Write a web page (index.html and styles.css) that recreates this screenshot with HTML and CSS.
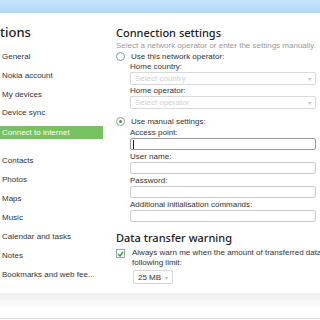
FILE: index.html
```html
<!DOCTYPE html>
<html>
<head>
<meta charset="utf-8">
<link rel="stylesheet" href="styles.css">
</head>
<body>
<div class="topbar"></div>
<div class="main">
  <aside class="side">
    <h1 class="side-title">tions</h1>
    <ul class="nav">
      <li>General</li>
      <li>Nokia account</li>
      <li>My devices</li>
      <li>Device sync</li>
      <li class="active">Connect to internet</li>
      <li class="gap">Contacts</li>
      <li>Photos</li>
      <li>Maps</li>
      <li>Music</li>
      <li>Calendar and tasks</li>
      <li>Notes</li>
      <li>Bookmarks and web fee...</li>
    </ul>
  </aside>
  <section class="content">
    <h2 class="title">Connection settings</h2>
    <p class="hint">Select a network operator or enter the settings manually.</p>
    <div class="radio-row"><span class="radio"></span><span>Use this network operator:</span></div>
    <div class="group">
      <div class="label">Home country:</div>
      <div class="select disabled"><span>Select country</span><span class="arrow">&#9662;</span></div>
      <div class="label">Home operator:</div>
      <div class="select disabled"><span>Select operator</span><span class="arrow">&#9662;</span></div>
    </div>
    <div class="radio-row second"><span class="radio on"></span><span>Use manual settings:</span></div>
    <div class="group">
      <div class="label">Access point:</div>
      <div class="input focus"><span class="caret"></span></div>
      <div class="label">User name:</div>
      <div class="input"></div>
      <div class="label">Password:</div>
      <div class="input"></div>
      <div class="label">Additional initialisation commands:</div>
      <div class="input"></div>
    </div>
    <h2 class="title title2">Data transfer warning</h2>
    <div class="check-row">
      <span class="check"><svg width="7" height="6" viewBox="0 0 7 6"><path d="M1 3 L3 5 L6 1" fill="none" stroke="#3a9a2a" stroke-width="1.4"/></svg></span>
      <span class="check-text">Always warn me when the amount of transferred data exceeds the following limit:</span>
    </div>
    <div class="small-select"><span>25 MB</span><span class="arrow">&#9662;</span></div>
  </section>
</div>
<div class="footer"></div>
</body>
</html>
```
FILE: styles.css
```css
html, body {
  margin: 0;
  padding: 0;
  width: 320px;
  height: 320px;
  overflow: hidden;
  background: #fff;
  font-family: "Liberation Sans", Arial, sans-serif;
  font-size: 8px;
  color: #333;
}
.topbar {
  height: 13px;
  background: linear-gradient(#c6e6fc, #aed8f8);
}
.main {
  display: flex;
  height: 280px;
}
.side {
  width: 103px;
  flex: none;
}
.side-title {
  margin: 12px 0 0 0;
  font-family: "Noto Sans", sans-serif;
  font-weight: 500;
  font-size: 13px;
  line-height: 14px;
  color: #222;
}
.nav {
  list-style: none;
  margin: 9px 0 0 0;
  padding: 0;
}
.nav li {
  height: 18.75px;
  line-height: 18.75px;
  padding-left: 2px;
  white-space: nowrap;
}
.nav li.active {
  background: #76c160;
  color: #fff;
  height: 13px;
  line-height: 13px;
  margin: 2.5px 0 3px 0;
}
.nav li.gap {
  margin-top: 12.5px;
}
.nav li.gap,
.nav li.gap ~ li {
  height: 19px;
  line-height: 19px;
}
.content {
  margin-left: 13px;
  width: 200px;
  flex: none;
}
.title {
  margin: 13px 0 0 0;
  font-family: "Noto Sans", sans-serif;
  font-weight: 500;
  font-size: 11px;
  line-height: 14px;
  color: #222;
}
.hint {
  margin: 0;
  color: #9a9a9a;
  line-height: 11px;
  height: 11px;
  white-space: nowrap;
}
.radio-row {
  display: flex;
  align-items: center;
  height: 10px;
  gap: 6px;
}
.radio-row.second {
  margin-top: 7px;
  height: 11px;
}
.radio {
  width: 9px;
  height: 9px;
  border: 1px solid #8a9aa8;
  border-radius: 50%;
  box-sizing: border-box;
  background: #fff;
  position: relative;
  flex: none;
}
.radio.on::after {
  content: "";
  position: absolute;
  left: 2px;
  top: 2px;
  width: 3px;
  height: 3px;
  border-radius: 50%;
  background: #3aa52a;
}
.group {
  padding-left: 14px;
}
.label {
  line-height: 11px;
  height: 11px;
  color: #333;
  white-space: nowrap;
}
.select, .input {
  height: 12px;
  box-sizing: border-box;
  border: 1px solid #d9d9d9;
  border-radius: 2px;
  margin-bottom: 1px;
  display: flex;
  align-items: center;
  justify-content: space-between;
  padding: 0 4px;
  color: #d0d0d0;
}
.select {
  height: 13px;
  margin-bottom: 0;
}
.select .arrow, .small-select .arrow {
  font-size: 6px;
  color: #bbb;
}
.input {
  border-color: #ccc;
}
.input.focus {
  border-color: #9a9a9a;
  justify-content: flex-start;
  padding-left: 2px;
}
.caret {
  width: 1px;
  height: 9px;
  background: #222;
}
.title2 {
  margin-top: 9px;
}
.check-row {
  display: flex;
  gap: 7px;
  margin-top: 3px;
}
.check {
  width: 9px;
  height: 9px;
  border: 1px solid #9aa8b4;
  box-sizing: border-box;
  display: flex;
  align-items: center;
  justify-content: center;
  margin-top: 1px;
  flex: none;
}
.check-text {
  width: 250px;
  flex: none;
  line-height: 10px;
  height: 20px;
  overflow: hidden;
  display: block;
}
.small-select {
  margin: 2px 0 0 17px;
  width: 40px;
  height: 14px;
  box-sizing: border-box;
  border: 1px solid #d6d6d6;
  border-radius: 2px;
  display: flex;
  align-items: center;
  justify-content: space-between;
  padding: 0 4px;
  color: #333;
}
.footer {
  height: 25px;
  background: linear-gradient(#efefef, #fff 70%);
  border-bottom: 1px solid #ddd;
}
```
